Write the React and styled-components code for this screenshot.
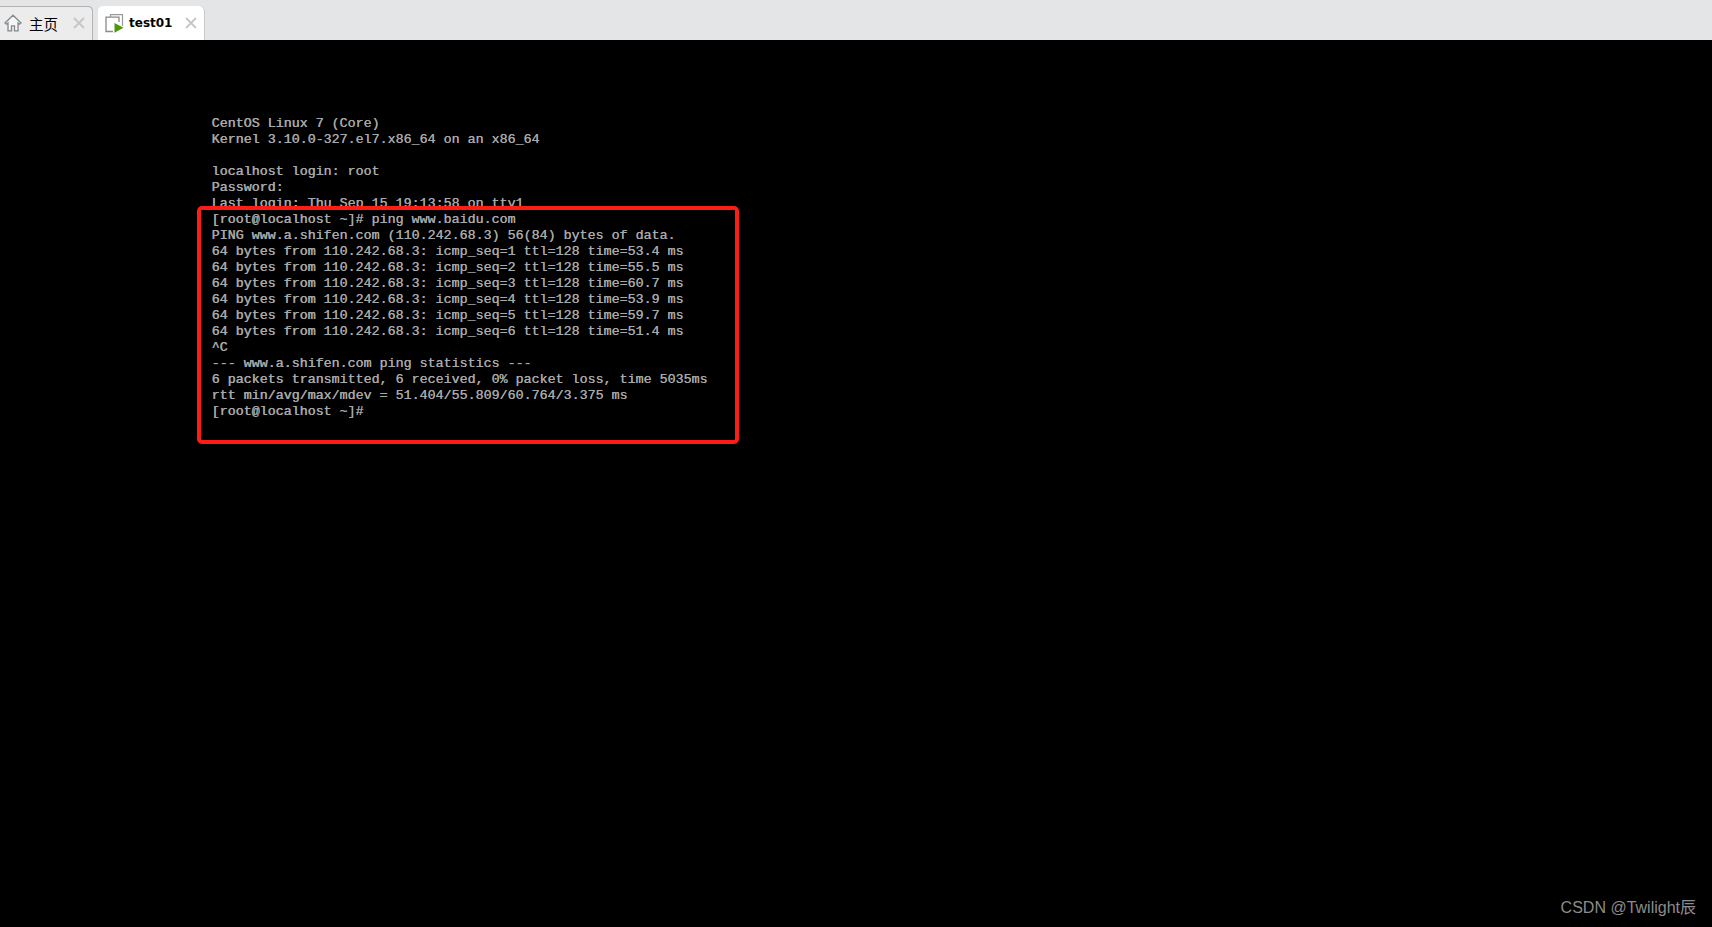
import React from "react";
import styled, { createGlobalStyle } from "styled-components";

const Global = createGlobalStyle`
  html, body { margin: 0; padding: 0; height: 100%; background: #000; overflow: hidden; }
  #root { height: 100%; }
`;

const Page = styled.div`
  position: relative;
  display: flex;
  flex-direction: column;
  width: 1712px;
  height: 927px;
  background: #000;
`;

const TabBar = styled.div`
  display: flex;
  align-items: flex-end;
  gap: 5px;
  height: 40px;
  flex: none;
  background: #e4e5e7;
`;

const Tab = styled.div`
  box-sizing: border-box;
  display: flex;
  align-items: center;
  width: ${(p) => p.$width}px;
  height: 34px;
  padding: 0 ${(p) => p.$right}px 0 ${(p) => p.$left}px;
  background: ${(p) => (p.$active ? "#ffffff" : "#ececec")};
  border-top-right-radius: 5px;
  border-top-left-radius: ${(p) => (p.$active ? "5px" : "0")};
  box-shadow: ${(p) => (p.$active ? "inset -1px 0 0 #c9c9c9" : "inset -1px 0 0 #b4b4b4, inset 0 1px 0 #b4b4b4")};
`;

const TabIcon = styled.svg`
  flex: none;
  display: block;
`;

const TabLabel = styled.span`
  margin-left: ${(p) => p.$gap}px;
  flex: 1;
  font-family: ${(p) => (p.$active ? '"DejaVu Sans", sans-serif' : '"Noto Sans CJK SC", sans-serif')};
  font-size: ${(p) => (p.$active ? "12px" : "14.5px")};
  font-weight: ${(p) => (p.$active ? 700 : 400)};
  color: #000;
  white-space: nowrap;
`;

const Screen = styled.main`
  flex: 1;
  padding: 75.5px 0 0 197px;
  background: #000;
`;

const Console = styled.pre`
  margin: 0;
  font-family: "Liberation Mono", monospace;
  font-size: 13.33px;
  line-height: 16px;
  color: #a8a8a8;
  text-shadow: 0.4px 0 0 #a8a8a8;
`;

const BootLines = styled(Console)`
  height: 90.5px;
  padding-left: 14.5px;
`;

const Frame = styled(Console)`
  position: relative;
  box-sizing: border-box;
  width: 542px;
  height: 238px;
  padding: 2px 0 0 10.5px;
  background: #000;
  border: 4px solid #fc1d14;
  border-radius: 5px;
`;

const Watermark = styled.span`
  position: absolute;
  right: 16px;
  bottom: 9px;
  font-family: "Liberation Sans", "Noto Sans CJK SC", sans-serif;
  font-size: 16px;
  line-height: 20px;
  color: #8c8c8c;
`;

const HomeIcon = () => (
  <TabIcon width="18" height="18" viewBox="0 0 18 18" fill="none" stroke="#84898e" strokeWidth="1.3">
    <path d="M9 1.2 1 9l1.6 1.2L4 9v7.8h3.5v-5h3v5H14V9l1.4 1.2L17 9Z" fill="#f6f6f6" />
  </TabIcon>
);

const CloseIcon = () => (
  <TabIcon width="12" height="12" viewBox="0 0 12 12" stroke="#c6c6c6" strokeWidth="1.8">
    <path d="M1 1l10 10M11 1 1 11" />
  </TabIcon>
);

const VmIcon = () => (
  <TabIcon width="19" height="19" viewBox="0 0 19 19" fill="none">
    <path d="M5.5 3V.7h12V12" stroke="#9a9a9a" strokeWidth="1.2" />
    <path d="M8 17.5H1V3.2h13V8" fill="#fff" stroke="#8a8a8a" strokeWidth="1.3" />
    <path d="M9.5 9 18.5 13.8 9.5 18.8Z" fill="#4c9a0c" />
  </TabIcon>
);

const boot = `CentOS Linux 7 (Core)
Kernel 3.10.0-327.el7.x86_64 on an x86_64

localhost login: root
Password:
Last login: Thu Sep 15 19:13:58 on tty1`;

const session = `[root@localhost ~]# ping www.baidu.com
PING www.a.shifen.com (110.242.68.3) 56(84) bytes of data.
64 bytes from 110.242.68.3: icmp_seq=1 ttl=128 time=53.4 ms
64 bytes from 110.242.68.3: icmp_seq=2 ttl=128 time=55.5 ms
64 bytes from 110.242.68.3: icmp_seq=3 ttl=128 time=60.7 ms
64 bytes from 110.242.68.3: icmp_seq=4 ttl=128 time=53.9 ms
64 bytes from 110.242.68.3: icmp_seq=5 ttl=128 time=59.7 ms
64 bytes from 110.242.68.3: icmp_seq=6 ttl=128 time=51.4 ms
^C
--- www.a.shifen.com ping statistics ---
6 packets transmitted, 6 received, 0% packet loss, time 5035ms
rtt min/avg/max/mdev = 51.404/55.809/60.764/3.375 ms
[root@localhost ~]#`;

export default function App() {
  return (
    <Page>
      <Global />
      <TabBar>
        <Tab $width={93} $left={4} $right={8}>
          <HomeIcon />
          <TabLabel $gap={7}>主页</TabLabel>
          <CloseIcon />
        </Tab>
        <Tab $width={107} $left={7} $right={8} $active>
          <VmIcon />
          <TabLabel $gap={5} $active>test01</TabLabel>
          <CloseIcon />
        </Tab>
      </TabBar>
      <Screen>
        <BootLines>{boot}</BootLines>
        <Frame>{session}</Frame>
      </Screen>
      <Watermark>CSDN @Twilight辰</Watermark>
    </Page>
  );
}
